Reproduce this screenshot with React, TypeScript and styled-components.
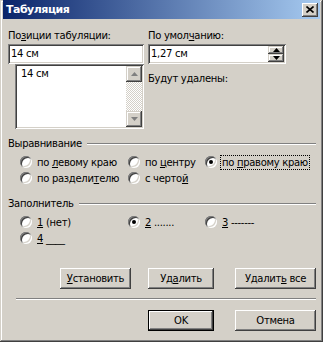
import React from "react";
import styled, { createGlobalStyle } from "styled-components";

const Global = createGlobalStyle`
  html, body { margin: 0; padding: 0; background: #d4d0c8; }
  body { font-family: "DejaVu Sans", "Liberation Sans", sans-serif; font-size: 10px; letter-spacing: -0.3px; color: #000; }
  * { box-sizing: border-box; }
`;

const Window = styled.div`
  width: 323px;
  height: 342px;
  background: #d4d0c8;
  box-shadow: inset -1px -1px #404040, inset 1px 1px #d4d0c8, inset -2px -2px #808080, inset 2px 2px #fff;
  display: flex;
  flex-direction: column;
  overflow: hidden;
`;

const TitleBar = styled.div`
  margin: 0 3px;
  height: 19px;
  background: linear-gradient(to right, #0a246a, #a6caf0);
  display: flex;
  align-items: center;
  justify-content: space-between;
  padding: 0 2px 0 3px;
`;

const TitleText = styled.span`
  color: #fff;
  font-weight: bold;
  font-size: 11px;
  letter-spacing: -0.5px;
`;

const CloseBtn = styled.div`
  width: 16px;
  height: 14px;
  background: #d4d0c8;
  box-shadow: inset -1px -1px #404040, inset 1px 1px #fff, inset -2px -2px #808080;
  display: flex;
  align-items: center;
  justify-content: center;
  padding-bottom: 1px;
`;

const Body = styled.div`
  padding: 10px 7px 0 8px;
  display: flex;
  flex-direction: column;
`;

const TopSection = styled.div`
  display: flex;
  gap: 4px;
`;

const Column = styled.div<{ $w: number }>`
  width: ${(p) => p.$w}px;
  display: flex;
  flex-direction: column;
`;

const Label = styled.div<{ $mt?: number }>`
  height: 13px;
  line-height: 13px;
  white-space: nowrap;
  margin-top: ${(p) => p.$mt ?? 0}px;
`;

const U = styled.span`
  text-decoration: underline;
  text-underline-offset: 1px;
`;

const Field = styled.div<{ $w: number; $h: number; $ml?: number; $mt?: number }>`
  width: ${(p) => p.$w}px;
  height: ${(p) => p.$h}px;
  margin-left: ${(p) => p.$ml ?? 0}px;
  margin-top: ${(p) => p.$mt ?? 0}px;
  background: #fff;
  box-shadow: inset 1px 1px #808080, inset -1px -1px #fff, inset 2px 2px #404040, inset -2px -2px #d4d0c8;
  padding: 2px;
  display: flex;
  position: relative;
`;

const FieldText = styled.div`
  flex: 1;
  padding: 1px 1px;
  line-height: 13px;
  white-space: nowrap;
`;

const ListText = styled.div`
  flex: 1;
  padding: 1px 4px;
  line-height: 13px;
`;

const ScrollBar = styled.div`
  width: 16px;
  display: flex;
  flex-direction: column;
  justify-content: space-between;
  background: repeating-conic-gradient(#fff 0 25%, #d4d0c8 0 50%) 0 0 / 2px 2px;
`;

const RaisedBox = styled.div<{ $w: number; $h: number }>`
  width: ${(p) => p.$w}px;
  height: ${(p) => p.$h}px;
  background: #d4d0c8;
  box-shadow: inset -1px -1px #404040, inset 1px 1px #d4d0c8, inset -2px -2px #808080, inset 2px 2px #fff;
  display: flex;
  align-items: center;
  justify-content: center;
`;

const SpinBox = styled.div`
  width: 16px;
  display: flex;
  flex-direction: column;
`;

const GroupHeader = styled.div<{ $mt: number }>`
  display: flex;
  align-items: center;
  margin-top: ${(p) => p.$mt}px;
  height: 13px;
  width: 308px;
`;

const GroupTitle = styled.span`
  line-height: 13px;
  margin-right: 5px;
  white-space: nowrap;
`;

const GroupLine = styled.div`
  flex: 1;
  height: 2px;
  border-top: 1px solid #808080;
  border-bottom: 1px solid #fff;
`;

const RadioGrid = styled.div`
  display: grid;
  grid-template-columns: 108px 77px auto;
  grid-auto-rows: 16px;
  margin-top: 4px;
  padding-left: 12px;
`;

const RadioItem = styled.label`
  display: flex;
  align-items: center;
  white-space: nowrap;
`;

const RadioCircle = styled.span<{ $on?: boolean }>`
  width: 12px;
  height: 12px;
  border-radius: 50%;
  background: #fff;
  box-shadow: inset 1px 1px 0 #808080, inset -1px -1px 0 #fff, inset 2px 2px 0 #404040, inset -2px -2px 0 #d4d0c8;
  margin-right: 3px;
  position: relative;
  flex: none;
  &::after {
    content: "";
    display: ${(p) => (p.$on ? "block" : "none")};
    position: absolute;
    left: 4px;
    top: 4px;
    width: 4px;
    height: 4px;
    border-radius: 50%;
    background: #000;
  }
`;

const RadioText = styled.span<{ $focus?: boolean }>`
  line-height: 13px;
  padding: 0 1px;
  border: 1px dotted ${(p) => (p.$focus ? "#000" : "transparent")};
`;

const ButtonRow = styled.div<{ $mt: number }>`
  display: flex;
  margin-top: ${(p) => p.$mt}px;
`;

const Button = styled.div<{ $w: number; $ml: number; $default?: boolean }>`
  width: ${(p) => p.$w}px;
  height: 21px;
  margin-left: ${(p) => p.$ml}px;
  display: flex;
  align-items: center;
  justify-content: center;
  background: #d4d0c8;
  border: ${(p) => (p.$default ? "1px solid #000" : "none")};
  box-shadow: inset -1px -1px #404040, inset 1px 1px #fff, inset -2px -2px #808080, inset 2px 2px #d4d0c8;
  white-space: nowrap;
`;

const Separator = styled.div`
  margin: 9px 0 0 8px;
  width: 300px;
  height: 2px;
  border-top: 1px solid #808080;
  border-bottom: 1px solid #fff;
`;

const Tri = ({ up, color = "#000" }: { up: boolean; color?: string }) => (
  <svg width="7" height="4" viewBox="0 0 7 4">
    <polygon points={up ? "3.5,0 7,4 0,4" : "0,0 7,0 3.5,4"} fill={color} />
  </svg>
);

const Radio = ({ on, focus, children }: { on?: boolean; focus?: boolean; children: React.ReactNode }) => (
  <RadioItem>
    <RadioCircle $on={on} />
    <RadioText $focus={focus}>{children}</RadioText>
  </RadioItem>
);

export default function App() {
  return (
    <>
      <Global />
      <Window>
        <TitleBar>
          <TitleText>Табуляция</TitleText>
          <CloseBtn>
            <svg width="8" height="7" viewBox="0 0 8 7">
              <path d="M0.5 0.5 L7.5 6.5 M7.5 0.5 L0.5 6.5" stroke="#000" strokeWidth="1.6" />
            </svg>
          </CloseBtn>
        </TitleBar>
        <Body>
          <TopSection>
            <Column $w={136}>
              <Label>
                По<U>з</U>иции табуляции:
              </Label>
              <Field $w={136} $h={20} $mt={2}>
                <FieldText>14 см</FieldText>
              </Field>
              <Field $w={129} $h={65} $ml={7}>
                <ListText>14 см</ListText>
                <ScrollBar>
                  <RaisedBox $w={16} $h={16}>
                    <Tri up color="#808080" />
                  </RaisedBox>
                  <RaisedBox $w={16} $h={16}>
                    <Tri up={false} color="#808080" />
                  </RaisedBox>
                </ScrollBar>
              </Field>
            </Column>
            <Column $w={138}>
              <Label>
                По умол<U>ч</U>анию:
              </Label>
              <Field $w={138} $h={20} $mt={2}>
                <FieldText>1,27 см</FieldText>
                <SpinBox>
                  <RaisedBox $w={16} $h={8}>
                    <Tri up />
                  </RaisedBox>
                  <RaisedBox $w={16} $h={8}>
                    <Tri up={false} />
                  </RaisedBox>
                </SpinBox>
              </Field>
              <Label $mt={8}>Будут удалены:</Label>
            </Column>
          </TopSection>

          <GroupHeader $mt={8}>
            <GroupTitle>Выравнивание</GroupTitle>
            <GroupLine />
          </GroupHeader>
          <RadioGrid>
            <Radio>
              по <U>л</U>евому краю
            </Radio>
            <Radio>
              по <U>ц</U>ентру
            </Radio>
            <Radio on focus>
              по <U>п</U>равому краю
            </Radio>
            <Radio>
              по раздели<U>т</U>елю
            </Radio>
            <Radio>
              с черто<U>й</U>
            </Radio>
          </RadioGrid>

          <GroupHeader $mt={11}>
            <GroupTitle>Заполнитель</GroupTitle>
            <GroupLine />
          </GroupHeader>
          <RadioGrid>
            <Radio>
              <U>1</U> (нет)
            </Radio>
            <Radio on>
              <U>2</U> .......
            </Radio>
            <Radio>
              <U>3</U> -------
            </Radio>
            <Radio>
              <U>4</U> ____
            </Radio>
          </RadioGrid>

          <ButtonRow $mt={22}>
            <Button $w={71} $ml={52}>
              <span>
                <U>У</U>становить
              </span>
            </Button>
            <Button $w={66} $ml={17}>
              <span>
                Уд<U>а</U>лить
              </span>
            </Button>
            <Button $w={81} $ml={21}>
              <span>
                Удалит<U>ь</U> все
              </span>
            </Button>
          </ButtonRow>
          <Separator />
          <ButtonRow $mt={10}>
            <Button $w={66} $ml={140} $default>
              OK
            </Button>
            <Button $w={81} $ml={21}>
              Отмена
            </Button>
          </ButtonRow>
        </Body>
      </Window>
    </>
  );
}
